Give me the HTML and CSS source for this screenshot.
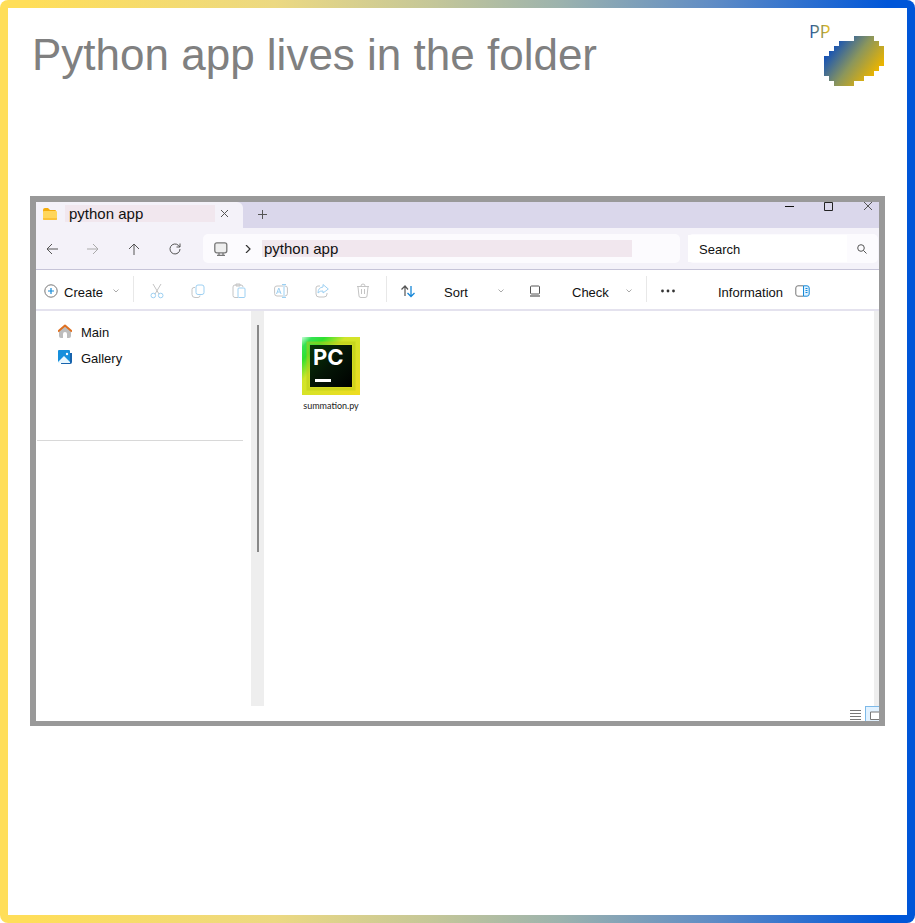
FILE: index.html
```html
<!DOCTYPE html>
<html lang="en">
<head>
<meta charset="utf-8">
<meta name="viewport" content="width=device-width, initial-scale=1">
<title>Python app lives in the folder</title>
<link rel="stylesheet" href="styles.css">
</head>
<body>
<div class="frame">
<div class="slide">
  <header class="header">
    <h1 class="title">Python app lives in the folder</h1>
    <svg class="logo" width="78" height="66" viewBox="-2 0 78 66" role="img" aria-label="PP">
      <defs>
        <linearGradient id="letters" x1="0" y1="0" x2="1" y2="0"><stop offset="0" stop-color="#1652b0"/><stop offset=".5" stop-color="#72845d"/><stop offset=".75" stop-color="#ccb02f"/><stop offset="1" stop-color="#e5bd23"/></linearGradient>
        <linearGradient id="blob" gradientUnits="userSpaceOnUse" x1="26" y1="22" x2="66" y2="52"><stop offset="0" stop-color="#1753b5"/><stop offset=".5" stop-color="#8b965c"/><stop offset="1" stop-color="#eab400"/></linearGradient>
      </defs>
      <text class="logo-text" x="0" y="16" fill="url(#letters)">PP</text>
      <path fill="url(#blob)" d="M45 14h20v5h5v5h5v20h-5v5h-5v5H55v5H45v5H25v-5h-5v-5h-5V34h5v-5h5v-5h5v-5h15z"/>
    </svg>
  </header>

  <main class="window">
    <div class="tabs">
      <div class="tab">
        <svg class="folder" width="16" height="14" viewBox="0 0 16 14"><path fill="#f4ac0c" d="M1 3q0-2 2-2h3l2 2h5q1 0 1 1v3H1z"/><rect x="1" y="4" width="14" height="9" rx="1" fill="#ffd65b"/><path fill="#fbc239" d="M1 11h14v1q0 1-1 1H2q-1 0-1-1z"/></svg>
        <span class="tab-name">python app</span>
        <button class="plain" aria-label="Close tab"><svg width="9" height="9" viewBox="0 0 9 9"><path class="line" d="m1 1 7 7m0-7-7 7"/></svg></button>
      </div>
      <button class="plain new-tab" aria-label="New tab"><svg width="9" height="9" viewBox="0 0 9 9"><path class="line" d="M4.500 0v9M0 4.500h9"/></svg></button>
      <div class="controls">
        <button class="plain" aria-label="Minimize"><svg width="10" height="9" viewBox="0 1 10 9"><path stroke="#111" d="M0 5.500h9"/></svg></button>
        <button class="plain" aria-label="Maximize"><svg width="10" height="9" viewBox="0 1 10 9"><path fill="none" stroke="#222" d="M.5 1.500h8v8h-8z"/></svg></button>
        <button class="plain" aria-label="Close"><svg width="10" height="9" viewBox="0 1 10 9"><path class="line" d="m1 1 8 8m0-8-8 8"/></svg></button>
      </div>
    </div>

    <div class="nav">
      <div class="moves">
        <button class="plain" aria-label="Back"><svg width="12" height="12" viewBox="0 0 12 12"><path class="line" d="M12 6H1m5-5L1 6l5 5"/></svg></button>
        <button class="plain" aria-label="Forward" disabled><svg width="12" height="12" viewBox="0 0 12 12"><path class="pale" d="M0 6h11M6 1l5 5-5 5"/></svg></button>
        <button class="plain" aria-label="Up"><svg width="12" height="12" viewBox="0 0 12 12"><path class="line" d="M6 12V1M1 6l5-5 5 5"/></svg></button>
        <button class="plain" aria-label="Refresh"><svg width="12" height="12" viewBox="0 0 12 12"><path class="line" d="M11 6a5 5 0 1 1-1.500-3.600L11 4M11 .5V4H7.500"/></svg></button>
      </div>
      <div class="address">
        <svg width="14" height="14" viewBox="0 0 14 14"><rect x=".8" y=".8" width="12" height="10" rx="2" fill="#eee" stroke="#777" stroke-width="1.300"/><path stroke="#777" stroke-width="1.300" d="M5 11v2m4-2v2M3 13.300h8"/></svg>
        <svg width="6" height="8" viewBox="0 0 6 8"><path fill="none" stroke="#333" stroke-width="1.200" d="m1 0 4 4-4 4"/></svg>
        <input class="path" type="text" value="python app" aria-label="Address">
      </div>
      <div class="search">
        <input class="query" type="text" placeholder="Search" aria-label="Search">
        <svg width="10" height="10" viewBox="0 0 10 10"><circle class="line" cx="4" cy="4" r="3.300"/><path class="line" d="m6.500 6.500 3 3"/></svg>
      </div>
    </div>

    <div class="toolbar">
      <button class="plain create">
        <svg width="14" height="14" viewBox="0 0 14 14"><circle cx="7" cy="7" r="6.200" fill="none" stroke="#777"/><path stroke="#168bd8" stroke-width="1.200" d="M7 4v6M4 7h6"/></svg>
        <span>Create</span>
        <svg class="caret" width="6" height="4" viewBox="0 0 6 4"><path class="pale" d="m.5.5 2.500 2.500L5.500.5"/></svg>
      </button>
      <div class="tools">
        <button class="plain" aria-label="Cut" disabled><svg width="14" height="16" viewBox="0 0 14 16"><path class="faint" d="m3 1 6 10M11 1 5 11"/><circle class="sky" cx="3.300" cy="12.500" r="2.300"/><circle class="sky" cx="10.700" cy="12.500" r="2.300"/></svg></button>
        <button class="plain" aria-label="Copy" disabled><svg width="14" height="16" viewBox="0 0 14 16"><path class="faint" d="M4 4.500H3q-2 0-2 2v5q0 3 3 3h3q2 0 2-2"/><rect class="sky" x="5" y="2" width="8" height="9.500" rx="2"/></svg></button>
        <button class="plain" aria-label="Paste" disabled><svg width="14" height="16" viewBox="0 0 14 16"><path class="faint" d="M6 14.500H3q-2 0-2-2V4q0-2 2-2h6q2 0 2 2M4 1h4v2H4z"/><rect class="sky" x="6" y="5" width="7" height="9.500" rx="1"/></svg></button>
        <button class="plain" aria-label="Rename" disabled><svg width="14" height="16" viewBox="0 0 14 16"><path class="faint" d="M9 3H3Q.6 3 .6 5v5.500q0 2.500 2.400 2.500h6m2-10q2.400 0 2.400 2v5.500q0 2.500-2.400 2.500"/><path class="sky" d="m2.500 11 2.300-6 2.300 6M3.500 9h3M10 2v12M8 1.500h4m-4 13h4"/></svg></button>
        <button class="plain" aria-label="Share" disabled><svg width="14" height="16" viewBox="0 0 14 16"><path class="faint" d="M5 3H3Q1 3 1 5v6q0 3 3 3h5q3 0 3-3v-1"/><path class="sky" d="M8 1.500 13.300 6 8 10V8q-3-.5-5 2 0-5.500 5-6z"/></svg></button>
        <button class="plain" aria-label="Delete" disabled><svg width="14" height="16" viewBox="0 0 14 16"><path class="faint" d="M1 3.500h12M5 3q0-2 2-2t2 2M2 4l1 9q0 1.500 2 1.500h4q2 0 2-1.500l1-9M5.500 6v5m3-5v5"/></svg></button>
      </div>
      <button class="plain sort">
        <svg width="14" height="14" viewBox="0 0 14 14"><path fill="none" stroke="#555" stroke-width="1.200" d="M4 12V2M.5 5.500 4 2l3 3.500"/><path fill="none" stroke="#1687d8" stroke-width="1.300" d="M10 2v10M6.500 9l3.500 3.500L13.500 9"/></svg>
        <span>Sort</span>
        <svg class="caret" width="6" height="4" viewBox="0 0 6 4"><path class="pale" d="m.5.5 2.500 2.500L5.500.5"/></svg>
      </button>
      <button class="plain check">
        <svg width="12" height="12" viewBox="0 0 12 12"><rect x="1.500" y="1" width="9" height="8" rx="1" fill="none" stroke="#555"/><path stroke="#777" stroke-width="1.500" d="M1 11h10"/></svg>
        <span>Check</span>
        <svg class="caret" width="6" height="4" viewBox="0 0 6 4"><path class="pale" d="m.5.5 2.500 2.500L5.500.5"/></svg>
      </button>
      <button class="plain more" aria-label="More"><svg width="14" height="4" viewBox="0 0 14 4"><g fill="#333"><circle cx="1.500" cy="2" r="1.400"/><circle cx="7" cy="2" r="1.400"/><circle cx="12.500" cy="2" r="1.400"/></g></svg></button>
      <button class="plain info">
        <span>Information</span>
        <svg width="15" height="12" viewBox="0 0 15 12"><path fill="#fff" stroke="#777" d="M8.500.8H3Q.8.8.8 3v6q0 2.200 2.200 2.200h5.500"/><path fill="#dff1ff" stroke="#178ad8" d="M8.500.8H12q2.200 0 2.200 2.200v6q0 2.200-2.200 2.200H8.500z"/><path stroke="#178ad8" d="M10.500 3.500h2m-2 2h2m-2 2h2"/></svg>
      </button>
    </div>

    <div class="content">
      <nav class="sidebar">
        <a class="place" href="#main">
          <svg width="14" height="14" viewBox="0 0 14 14"><path fill="#bdbdbd" d="M1 7l6-5 6 5v5q0 2-2 2H9v-4q0-2-2-2t-2 2v4H3q-2 0-2-2z"/><path fill="none" stroke="#df7021" stroke-width="2" stroke-linejoin="round" d="m0 7.500 7-6 7 6"/></svg>
          Main</a>
        <a class="place" href="#gallery">
          <svg width="14" height="14" viewBox="0 0 14 14"><path fill="#1763ad" d="M4 3h10v9q0 2-2 2H3z"/><rect width="12" height="13" rx="1" fill="#168fdc"/><path fill="#e8f7ff" d="m0 12 6-6 6 6v1H0z"/><circle cx="9" cy="4" r="1.200" fill="#fff"/></svg>
          Gallery</a>
      </nav>
      <div class="track"><div class="thumb"></div></div>
      <div class="files">
        <a class="file" href="#summation">
          <svg width="58" height="58" viewBox="0 0 58 58">
            <defs>
              <linearGradient id="rim" x1="0" y1="0" x2="1" y2="1"><stop offset="0" stop-color="#c8ffd8"/><stop offset=".09" stop-color="#35e255"/><stop offset=".2" stop-color="#2fe02f"/><stop offset=".38" stop-color="#d0e52a"/><stop offset="1" stop-color="#f0dc20"/></linearGradient>
              <linearGradient id="screen" x1="0" y1="0" x2="1" y2="1"><stop offset="0" stop-color="#073607"/><stop offset=".5" stop-color="#041506"/><stop offset="1" stop-color="#000"/></linearGradient>
            </defs>
            <path fill="url(#rim)" d="M0 0h58v58H0z"/>
            <path fill="none" stroke="#b7ca13" stroke-opacity=".5" stroke-width="3" d="M6 52h46V6H6z"/>
            <path fill="url(#screen)" d="M8 8h42v42H8z"/>
            <text class="badge" x="11" y="28">PC</text>
            <path fill="#fff" d="M13 42h16v3H13z"/>
          </svg>
          <span>summation.py</span>
        </a>
        <div class="views">
          <button class="plain" aria-label="Details"><svg width="11" height="10" viewBox="0 0 11 10"><path stroke="#777" d="M0 .5h11M0 3.500h11M0 6.500h11M0 9.500h11"/></svg></button>
          <button class="plain large" aria-label="Large icons"><svg width="9" height="9" viewBox="0 0 9 9"><path fill="#fff" stroke="#777" d="M9 1H.5v7.500H9"/></svg></button>
        </div>
      </div>
      <div class="edge"></div>
    </div>
  </main>
</div>
</div>
</body>
</html>
```
FILE: styles.css
```css
* { box-sizing: border-box; }

body {
  margin: 0;
  background: #fff;
  color: #111;
  font: 13px/16px "Liberation Sans", sans-serif;
}

svg { display: block; flex: none; }

.line, .pale, .faint, .sky { fill: none; }
.line { stroke: #555; }
.pale { stroke: #aaa; }
.faint { stroke: #c4c4c4; }
.sky { stroke: #9dd0f2; }

.frame {
  min-height: 100vh;
  padding: 8px;
  display: grid;
  border-radius: 8px;
  background: linear-gradient(90deg, #ffde59 3%, #ecd982 30%, #c5c798 47%, #9db3ad 61%, #5f8cc5 78%, #0056d8 97%);
}

.slide {
  padding: 14px 22px;
  background: #fff;
}

.header {
  height: 174px;
  display: flex;
  justify-content: space-between;
  align-items: flex-start;
}

.title {
  margin: 7px 0 0 2px;
  color: #808080;
  font-size: 44px;
  line-height: 52px;
  font-weight: 400;
}

.logo-text { font: 18px "Open Sans", sans-serif; }

.plain {
  padding: 0;
  border: 0;
  background: none;
  color: inherit;
  font: inherit;
  display: flex;
  align-items: center;
  justify-content: center;
}

.window {
  border: 6px solid #999;
  border-bottom-width: 5px;
}

.tabs {
  height: 26px;
  display: flex;
  background: #dad7eb;
}

.tab {
  width: 207px;
  padding: 0 14px 3px 6px;
  display: flex;
  align-items: center;
  border-radius: 0 6px 0 0;
  background: #f4f2f9;
}

.tab-name {
  flex: 1;
  margin: 0 5px 0 7px;
  padding-left: 4px;
  background: #f1e7ee;
  font-size: 15px;
  line-height: 17px;
}

.new-tab {
  width: 38px;
  padding-bottom: 1px;
}

.controls {
  margin-left: auto;
  padding-right: 6px;
  display: flex;
  gap: 29px;
  align-items: flex-start;
}

.nav {
  height: 42px;
  padding-top: 6px;
  display: flex;
  align-items: flex-start;
  border-bottom: 1px solid #c6c4d8;
  background: #f4f2f9;
}

.moves, .address, .search {
  height: 29px;
  display: flex;
  align-items: center;
}

.moves {
  width: 167px;
  padding-left: 10px;
  gap: 29px;
}

.address, .search {
  border-radius: 5px;
  background: #fcfbfe;
}

.address {
  flex: 1;
  padding: 0 48px 0 11px;
  gap: 17px;
}

.path, .query {
  min-width: 0;
  flex: 1;
  border: 0;
  color: inherit;
  font: inherit;
}

.path {
  height: 17px;
  margin-left: -6px;
  padding: 0 2px;
  background: #f1e7ee;
  font-size: 15px;
}

.search {
  width: 190px;
  margin: 0 1px 0 8px;
  padding-right: 11px;
  gap: 10px;
}

.query {
  height: 27px;
  padding: 2px 0 0 11px;
  background: #fff;
}

.query::placeholder { color: #111; opacity: 1; }

.toolbar {
  height: 41px;
  padding: 6px 0 7px;
  display: flex;
  border-bottom: 2px solid #e4e2ee;
}

.toolbar .plain { padding-top: 4px; }
.toolbar span { padding-top: 3px; }

.create, .sort, .check, .info { justify-content: flex-start; }
.caret { margin-left: auto; }

.toolbar .create {
  width: 97px;
  padding-left: 8px;
  padding-right: 14px;
  gap: 6px;
}

.tools {
  width: 254px;
  padding: 0 2px;
  display: grid;
  grid-template-columns: repeat(6, 1fr);
  border: solid #e8e8e8;
  border-width: 0 1px;
}

.toolbar .sort {
  width: 129px;
  padding-left: 14px;
  padding-right: 12px;
  gap: 29px;
}

.toolbar .check {
  width: 131px;
  padding-left: 13px;
  padding-right: 14px;
  border-right: 1px solid #e8e8e8;
}

.check span { margin-left: 31px; }

.more { width: 42px; }

.toolbar .info {
  padding-left: 29px;
  gap: 12px;
}

.content {
  min-height: 410px;
  display: flex;
}

.sidebar {
  width: 206px;
  height: 130px;
  margin: 0 8px 0 1px;
  padding: 9px 0 0 21px;
  border-bottom: 1px solid #d8d8d8;
}

.place {
  height: 26px;
  display: flex;
  align-items: center;
  gap: 9px;
  color: inherit;
  text-decoration: none;
}

.place svg { margin-bottom: 4px; }

.track {
  width: 13px;
  margin-bottom: 15px;
  padding-top: 14px;
  background: #eee;
}

.thumb {
  width: 2px;
  height: 227px;
  margin: 0 auto;
  background: #888;
}

.files {
  flex: 1;
  display: flex;
  flex-direction: column;
  justify-content: space-between;
  padding: 26px 0 0 31px;
}

.file {
  width: 72px;
  display: flex;
  flex-direction: column;
  align-items: center;
  gap: 3px;
  color: #222;
  font: 9px/16px Lato, sans-serif;
  text-decoration: none;
}

.badge {
  fill: #fff;
  font: bold 22px Inter, sans-serif;
}

.views {
  margin-right: -5px;
  display: flex;
  align-items: center;
  justify-content: flex-end;
  gap: 4px;
}

.views .plain { padding-top: 2px; }

.large {
  width: 14px;
  height: 15px;
  justify-content: flex-end;
  border: solid #7db9e8;
  border-width: 1px 0 0 1px;
  background: #e2f2ff;
}

.edge {
  width: 5px;
  margin-bottom: 15px;
  background: #eee;
}
```
